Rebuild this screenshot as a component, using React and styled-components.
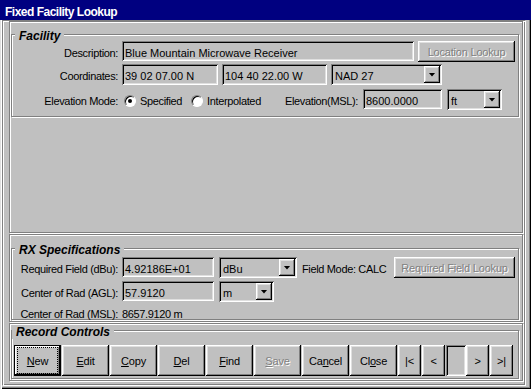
import styled, { createGlobalStyle, css } from "styled-components";

const GlobalStyle = createGlobalStyle`
  html, body {
    margin: 0;
    padding: 0;
  }
  body {
    background: #c0c0c0;
    font-family: "Liberation Sans", Arial, sans-serif;
    font-size: 11px;
    color: #000;
  }
`;

const raised = css`
  box-shadow: inset -1px -1px #000, inset 1px 1px #fff, inset -2px -2px #808080,
    inset 2px 2px #dfdfdf;
`;

const sunken = css`
  box-shadow: inset 1px 1px #808080, inset -1px -1px #fff, inset 2px 2px #000,
    inset -2px -2px #dfdfdf;
`;

const etched = css`
  border: 1px solid #808080;
  box-shadow: inset 1px 1px #fff, 1px 1px #fff;
`;

const Window = styled.div`
  width: 531px;
  height: 389px;
  display: flex;
  flex-direction: column;
  background: #c0c0c0;
  overflow: hidden;
`;

const TitleBar = styled.div`
  height: 20px;
  flex: none;
  box-sizing: border-box;
  padding: 4px 0 0 5px;
  background: #000080;
  color: #fff;
  font-weight: bold;
  font-size: 12px;
  letter-spacing: -0.5px;
  line-height: 16px;
`;

const Frame = styled.div`
  flex: 1;
  display: flex;
  box-sizing: border-box;
  padding: 0 5px 3px 2px;
  box-shadow: inset 1px 0 #dfdfdf, inset 2px 0 #fff, inset -1px -1px #000,
    inset -2px -2px #808080;
`;

const Client = styled.div`
  flex: 1;
  display: flex;
  flex-direction: column;
  box-sizing: border-box;
  padding: 0 2px 1px 6px;
  border: 1px solid;
  border-color: #808080 #fff #fff #808080;
  box-shadow: inset 1px 1px #fff, inset -1px -1px #808080;
`;

const Panel = styled.div`
  ${etched};
  height: ${(p) => p.$h}px;
  flex: none;
  box-sizing: border-box;
  margin-bottom: 1px;
  padding: 0 3px 0 1px;
`;

const Group = styled.div`
  ${etched};
  position: relative;
  box-sizing: border-box;
  height: ${(p) => p.$h}px;
  margin-top: ${(p) => p.$mt}px;
  padding-top: ${(p) => p.$pt}px;
  display: flex;
  flex-direction: column;
`;

const GroupTitle = styled.span`
  position: absolute;
  top: -6px;
  left: ${(p) => p.$left}px;
  padding: 0 4px;
  background: #c0c0c0;
  font-size: 12px;
  font-weight: bold;
  font-style: italic;
  line-height: 14px;
`;

const Row = styled.div`
  display: flex;
  align-items: flex-start;
  margin-top: ${(p) => p.$mt || 0}px;
  margin-left: ${(p) => p.$ml || 0}px;
  gap: ${(p) => p.$gap || 0}px;
`;

const Label = styled.span`
  width: ${(p) => p.$w ?? 106}px;
  margin-right: ${(p) => p.$mr ?? 4}px;
  flex: none;
  text-align: right;
  padding-top: 4px;
  line-height: 16px;
  letter-spacing: -0.35px;
  white-space: nowrap;
`;

const Text = styled.span`
  width: ${(p) => (p.$w ? `${p.$w}px` : "auto")};
  margin-left: ${(p) => p.$ml || 0}px;
  flex: none;
  padding-top: 4px;
  line-height: 16px;
  letter-spacing: -0.35px;
  white-space: nowrap;
`;

const Field = styled.div`
  ${sunken};
  width: ${(p) => p.$w}px;
  height: ${(p) => p.$h || 20}px;
  margin-left: ${(p) => p.$ml || 0}px;
  flex: none;
  box-sizing: border-box;
  padding: 4px 3px 0 3px;
  line-height: 16px;
  white-space: nowrap;
  overflow: hidden;
`;

const Combo = styled.div`
  ${sunken};
  width: ${(p) => p.$w}px;
  height: 21px;
  margin-left: ${(p) => p.$ml || 0}px;
  flex: none;
  display: flex;
  box-sizing: border-box;
  padding: 2px;
`;

const ComboText = styled.span`
  flex: 1;
  padding: 2px 0 0 2px;
  line-height: 16px;
  white-space: nowrap;
  overflow: hidden;
`;

const DropButton = styled.span`
  ${raised};
  width: 16px;
  flex: none;
  display: flex;
  align-items: center;
  justify-content: center;

  &::after {
    content: "";
    width: 7px;
    height: 4px;
    background: #000;
    clip-path: polygon(0 0, 100% 0, 50% 100%);
  }
`;

const Button = styled.button`
  ${raised};
  width: ${(p) => p.$w}px;
  height: ${(p) => p.$h}px;
  margin-left: ${(p) => p.$ml || 0}px;
  flex: none;
  display: flex;
  align-items: center;
  justify-content: center;
  box-sizing: border-box;
  padding: 0;
  border: 0;
  background: #c0c0c0;
  font-family: "Liberation Sans", Arial, sans-serif;
  font-size: 11px;
  font-weight: 400;
  letter-spacing: -0.2px;
  color: #000;
  white-space: nowrap;

  &:disabled {
    color: #808080;
    text-shadow: 1px 1px #fff;
  }

  ${(p) =>
    p.$default &&
    css`
      box-shadow: inset 0 0 0 1px #000, inset -2px -2px #000, inset 2px 2px #fff,
        inset -3px -3px #808080, inset 3px 3px #dfdfdf;
    `}
`;

const FocusRing = styled.span`
  display: flex;
  align-items: center;
  justify-content: center;
  width: 39px;
  height: 25px;
  outline: 1px dotted #000;
`;

const NavGap = styled.div`
  ${sunken};
  width: 20px;
  height: 31px;
  flex: none;
`;

const RadioItem = styled.label`
  width: ${(p) => p.$w}px;
  margin-left: ${(p) => p.$ml || 0}px;
  flex: none;
  display: flex;
  align-items: flex-start;
  gap: 4px;
`;

const RadioCircle = styled.span`
  width: 12px;
  height: 12px;
  margin-top: 6px;
  flex: none;
  box-sizing: border-box;
  border-radius: 50%;
  border: 1px solid;
  border-color: #808080 #fff #fff #808080;
  background: #fff;
  box-shadow: inset 1px 1px #000;
  display: flex;
  align-items: center;
  justify-content: center;

  &::after {
    content: "";
    width: 4px;
    height: 4px;
    border-radius: 50%;
    background: ${(p) => (p.$checked ? "#000" : "transparent")};
  }
`;

const Spacer = styled.div`
  flex: 1;
`;

function Select({ w, ml, children }) {
  return (
    <Combo $w={w} $ml={ml}>
      <ComboText>{children}</ComboText>
      <DropButton />
    </Combo>
  );
}

const recordButtons = [
  { key: "N", rest: "ew" },
  { key: "E", rest: "dit" },
  { key: "C", rest: "opy" },
  { key: "D", rest: "el" },
  { key: "F", rest: "ind" },
  { key: "S", rest: "ave", disabled: true },
];

export default function App() {
  return (
    <>
      <GlobalStyle />
      <Window>
        <TitleBar>Fixed Facility Lookup</TitleBar>
        <Frame>
          <Client>
            <Panel $h={212}>
              <Group $mt={12} $h={83} $pt={6}>
                <GroupTitle $left={3}>Facility</GroupTitle>
                <Row>
                  <Label>Description:</Label>
                  <Field $w={292}>Blue Mountain Microwave Receiver</Field>
                  <Button $w={97} $h={21} $ml={4} disabled>
                    Location Lookup
                  </Button>
                </Row>
                <Row $mt={2}>
                  <Label>Coordinates:</Label>
                  <Field $w={96} $h={21}>39 02 07.00 N</Field>
                  <Field $w={105} $h={21} $ml={4}>
                    104 40 22.00 W
                  </Field>
                  <Select w={111} ml={4}>
                    NAD 27
                  </Select>
                </Row>
                <Row $mt={4}>
                  <Label>Elevation Mode:</Label>
                  <RadioItem $w={67} $ml={2}>
                    <RadioCircle $checked />
                    <Text>Specified</Text>
                  </RadioItem>
                  <RadioItem $w={80}>
                    <RadioCircle />
                    <Text>Interpolated</Text>
                  </RadioItem>
                  <Label $w={87} $mr={5}>
                    Elevation(MSL):
                  </Label>
                  <Field $w={79}>8600.0000</Field>
                  <Select w={55} ml={5}>
                    ft
                  </Select>
                </Row>
              </Group>
            </Panel>

            <Panel $h={88}>
              <Group $mt={13} $h={72} $pt={8}>
                <GroupTitle $left={3}>RX Specifications</GroupTitle>
                <Row>
                  <Label>Required Field (dBu):</Label>
                  <Field $w={92}>4.92186E+01</Field>
                  <Select w={78} ml={5}>
                    dBu
                  </Select>
                  <Text $w={92} $ml={5}>
                    Field Mode: CALC
                  </Text>
                  <Button $w={121} $h={21} disabled>
                    Required Field Lookup
                  </Button>
                </Row>
                <Row $mt={3}>
                  <Label>Center of Rad (AGL):</Label>
                  <Field $w={92}>57.9120</Field>
                  <Select w={55} ml={5}>
                    m
                  </Select>
                </Row>
                <Row>
                  <Label>Center of Rad (MSL):</Label>
                  <Text>8657.9120 m</Text>
                </Row>
              </Group>
            </Panel>

            <Panel $h={58}>
              <Group $mt={6} $h={49} $pt={14}>
                <GroupTitle $left={0}>Record Controls</GroupTitle>
                <Row $ml={2} $gap={1}>
                  {recordButtons.map((b, i) => (
                    <Button
                      key={b.key}
                      $w={47}
                      $h={31}
                      $default={i === 0}
                      disabled={b.disabled}
                    >
                      {i === 0 ? (
                        <FocusRing>
                          <u>{b.key}</u>
                          {b.rest}
                        </FocusRing>
                      ) : (
                        <span>
                          <u>{b.key}</u>
                          {b.rest}
                        </span>
                      )}
                    </Button>
                  ))}
                  <Button $w={47} $h={31}>
                    <span>
                      Ca<u>n</u>cel
                    </span>
                  </Button>
                  <Button $w={47} $h={31}>
                    <span>
                      Cl<u>o</u>se
                    </span>
                  </Button>
                  <Button $w={23} $h={31}>
                    |&lt;
                  </Button>
                  <Button $w={23} $h={31}>
                    &lt;
                  </Button>
                  <NavGap />
                  <Button $w={23} $h={31} $ml={-1}>
                    &gt;
                  </Button>
                  <Button $w={23} $h={31}>
                    &gt;|
                  </Button>
                  <Spacer />
                </Row>
              </Group>
            </Panel>
          </Client>
        </Frame>
      </Window>
    </>
  );
}
